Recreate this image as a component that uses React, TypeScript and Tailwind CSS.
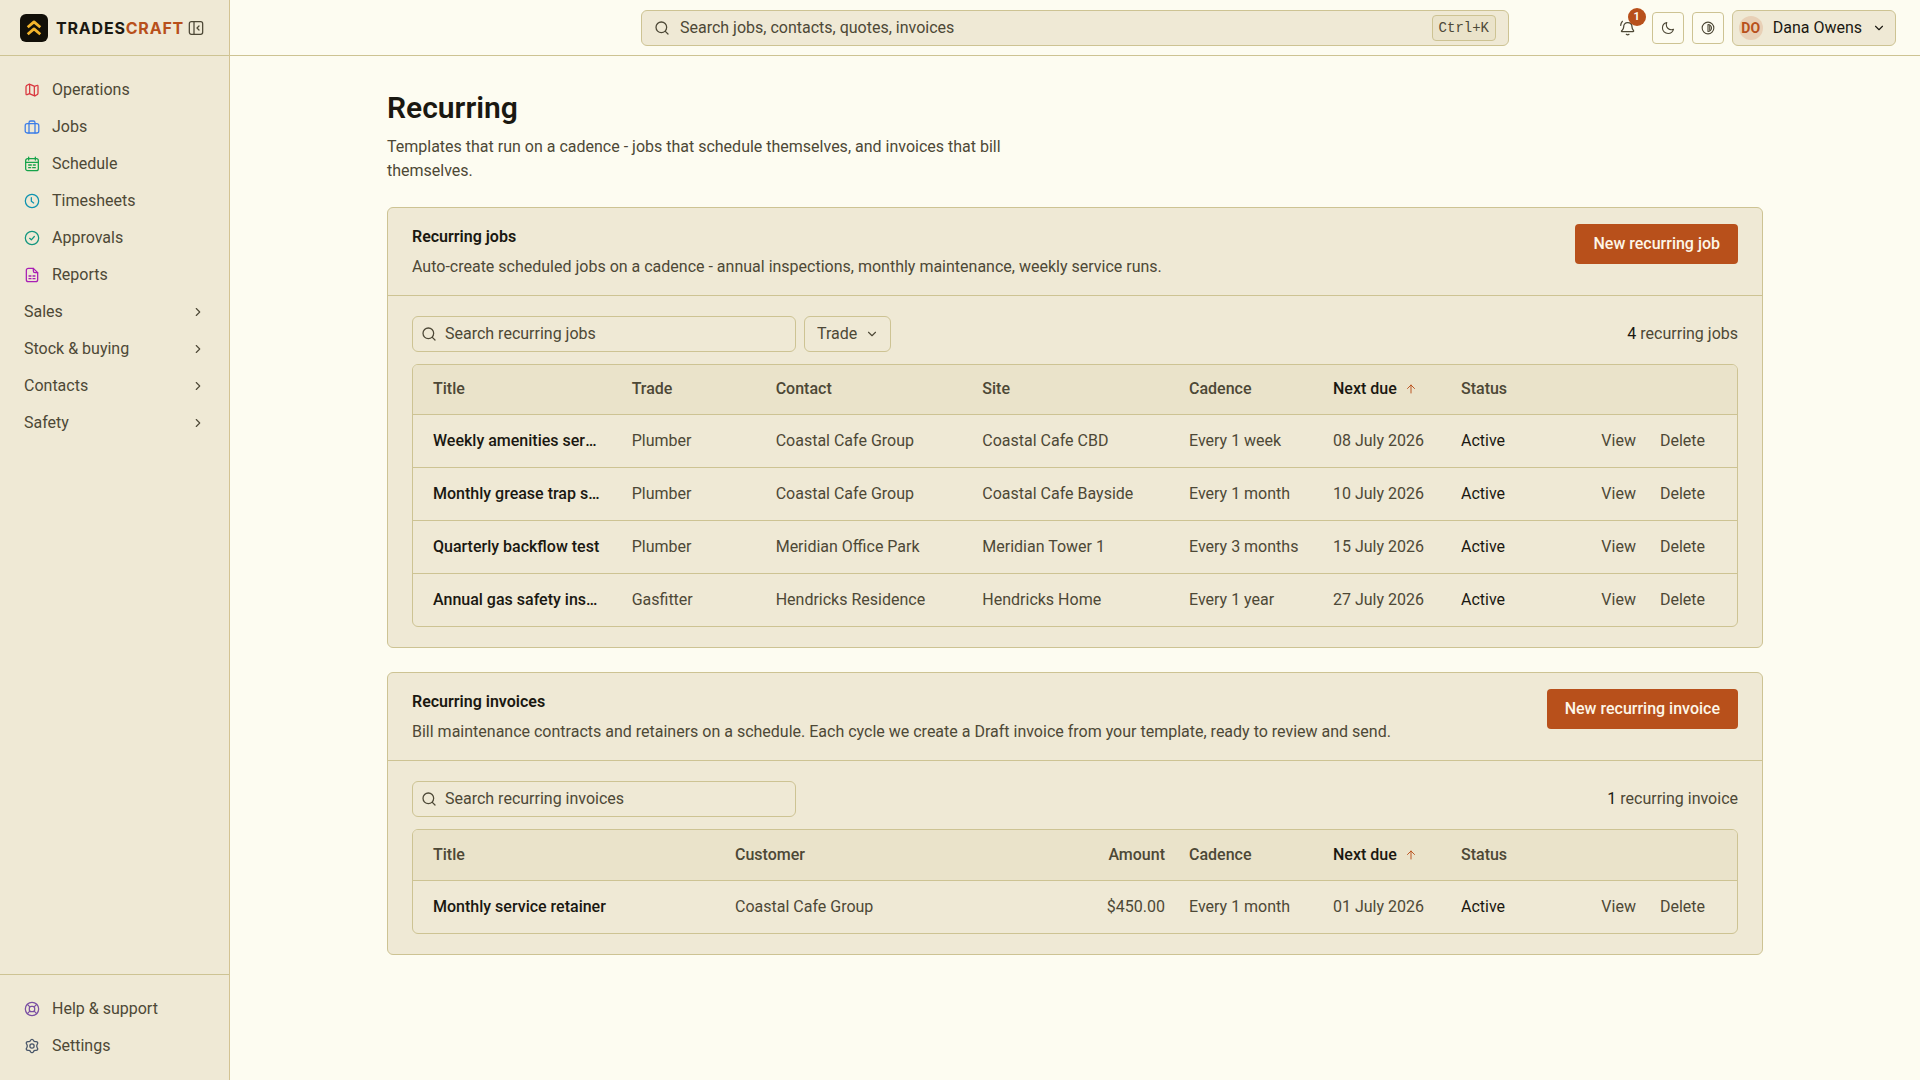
import type { ReactNode } from 'react';

const iconPaths = {
  map: (
    <>
      <path d="M3 8.2c0-1.2 0-1.9.4-2.4.3-.5.9-.8 1.9-1.3l1-.5c.9-.5 1.3-.7 1.8-.7s.9.2 1.8.6l4.300 2c.8.4 1.200.6 1.700.6s.9-.2 1.700-.6c1.700-.9 2.500-1.300 3-.9.4.3.4 1 .4 2.300v8.500c0 1.200 0 1.900-.4 2.400-.3.5-.9.8-1.900 1.300l-1 .5c-.9.5-1.300.7-1.800.7s-.9-.2-1.800-.6l-4.300-2c-.8-.4-1.200-.6-1.700-.6s-.9.2-1.700.6c-1.700.9-2.500 1.300-3 .9C3 18.700 3 18 3 16.700Z" />
      <path d="M8.5 3.500v14M15.500 6.800v13.700" />
    </>
  ),
  briefcase: (
    <>
      <rect x="1.800" y="7" width="20.400" height="14" rx="3" />
      <path d="M7.500 21V5.500c0-1.700.8-2.500 2.500-2.500h4c1.700 0 2.500.8 2.500 2.500V21" />
    </>
  ),
  calendar: (
    <>
      <rect x="2.500" y="4" width="19" height="18" rx="3" />
      <path d="M7 1.800V6M17 1.800V6M2.500 9.500h19M7 13.500h4M14 13.500h3M7 17.500h3M13 17.500h4" />
    </>
  ),
  clock: (
    <>
      <circle cx="12" cy="12" r="10" />
      <path d="M11 7v5.500l3.500 2.500" />
    </>
  ),
  check: (
    <>
      <circle cx="12" cy="12" r="10" />
      <path d="m8.500 12.500 2.500 2.200 4.500-5" />
    </>
  ),
  report: (
    <>
      <path d="M14 2H6.500C4.600 2 3.500 3.100 3.500 5v14c0 1.900 1.100 3 3 3h11c1.900 0 3-1.100 3-3V8.500Z" />
      <path d="M14 2v4c0 1.700.8 2.500 2.500 2.500h4M7.500 13.500h3M13.500 13.500h3M7.500 17.500h3M13.500 17.500h3" />
    </>
  ),
  support: (
    <>
      <circle cx="12" cy="12" r="10" />
      <rect x="8" y="8" width="8" height="8" rx="3" />
      <path d="m5 5 3.800 3.800M19 5l-3.800 3.800M5 19l3.800-3.800M19 19l-3.800-3.800" />
    </>
  ),
  gear: (
    <>
      <circle cx="12" cy="12" r="3.200" />
      <path d="M12 2c1.700 0 2 1.100 2.600 2.300.5.900 1.300 1.300 2.300 1.200 1.400-.1 2.600-.5 3.500 1 .9 1.500-.1 2.300-.8 3.400-.7 1.300-.7 2.900 0 4.200.7 1.100 1.700 1.900.8 3.400-.9 1.500-2.100 1.100-3.500 1-1-.1-1.800.3-2.300 1.200C14 20.900 13.700 22 12 22s-2-1.100-2.600-2.300c-.5-.9-1.300-1.300-2.300-1.200-1.400.1-2.600.5-3.500-1-.9-1.500.1-2.300.8-3.400.7-1.300.7-2.900 0-4.200-.7-1.100-1.700-1.900-.8-3.400.9-1.500 2.100-1.100 3.500-1 1 .1 1.800-.3 2.300-1.200C10 3.100 10.300 2 12 2Z" />
    </>
  ),
  panel: (
    <>
      <rect x="2" y="2.500" width="20" height="19" rx="3" />
      <path d="M9 2.500v19M16.500 9l-3 3 3 3" />
    </>
  ),
  search: (
    <>
      <circle cx="11" cy="11" r="8" />
      <path d="m17 17 4 4" />
    </>
  ),
  bell: (
    <>
      <path d="M2.500 17.500h17c.9 0 1.300-.9.8-1.600-1.300-1.600-2.300-2.900-2.300-5.400C18 6.500 15.300 4 11.500 4S5.500 6.500 5.500 10.500c0 2.500-1 3.800-2.600 5.400-.8.700-.9 1.600-.4 1.600Z" />
      <path d="M9.500 21.500c1 .7 3 .7 4 0M1 8c.2-2.700 1.200-4.500 2.500-6" />
    </>
  ),
  moon: (
    <path d="M21.500 14.100c-1.200.6-2.500.8-3.900.8-4.700 0-8.500-3.800-8.500-8.500 0-1.400.3-2.700.8-3.900C5.600 3.600 2.500 7.300 2.500 11.800c0 5.400 4.300 9.700 9.700 9.700 4.500 0 8.200-3.100 9.300-7.400Z" />
  ),
  contrast: (
    <>
      <circle cx="12" cy="12" r="10" />
      <path d="M12 6v12c3.300 0 6-2.700 6-6s-2.700-6-6-6ZM15 7.500v9" />
    </>
  ),
  chevronRight: <path d="m9 6 6 6-6 6" />,
  chevronDown: <path d="m6 9 6 6 6-6" />,
  arrowUp: <path d="M12 20V4M5 11l7-7 7 7" />,
};

type IconName = keyof typeof iconPaths;

function Icon({ name, size = 16, className = '' }: { name: IconName; size?: number; className?: string }) {
  return (
    <svg
      width={size}
      height={size}
      viewBox="0 0 24 24"
      fill="none"
      stroke="currentColor"
      strokeWidth={1.9}
      strokeLinecap="round"
      strokeLinejoin="round"
      aria-hidden="true"
      className={`shrink-0 ${className}`}
    >
      {iconPaths[name]}
    </svg>
  );
}

const mainLinks: { label: string; icon: IconName; color: string }[] = [
  { label: 'Operations', icon: 'map', color: 'text-[#d9363e]' },
  { label: 'Jobs', icon: 'briefcase', color: 'text-[#3b7de8]' },
  { label: 'Schedule', icon: 'calendar', color: 'text-[#16a34a]' },
  { label: 'Timesheets', icon: 'clock', color: 'text-[#0e93b0]' },
  { label: 'Approvals', icon: 'check', color: 'text-[#12967f]' },
  { label: 'Reports', icon: 'report', color: 'text-[#a81fb5]' },
];

const groups = ['Sales', 'Stock & buying', 'Contacts', 'Safety'];

const footerLinks: { label: string; icon: IconName; color: string }[] = [
  { label: 'Help & support', icon: 'support', color: 'text-[#7a4fa3]' },
  { label: 'Settings', icon: 'gear', color: 'text-[#475569]' },
];

function NavLink({ label, icon, color }: { label: string; icon: IconName; color: string }) {
  return (
    <a href="#" className="flex h-9 items-center gap-3 rounded px-3 hover:bg-[#e9e2c9]">
      <Icon name={icon} className={color} />
      {label}
    </a>
  );
}

function Sidebar() {
  return (
    <aside className="sticky top-0 flex h-screen w-[230px] shrink-0 flex-col border-r border-[#d3c393] bg-[#efe9d5]">
      <div className="flex h-14 items-center border-b border-[#cdc393] px-5">
        <svg width="28" height="28" viewBox="0 0 28 28" aria-hidden="true" className="shrink-0">
          <rect width="28" height="28" rx="6" fill="#110f08" />
          <path
            d="m7.700 13.300 6.300-5.400 6.300 5.400M7.700 20.300l6.300-5.400 6.300 5.400"
            fill="none"
            stroke="#f2b42c"
            strokeWidth="2.8"
            strokeLinejoin="round"
          />
        </svg>
        <span className="ml-2 font-[Inter,sans-serif] text-base leading-6 font-bold tracking-wider text-[#1a1811]">
          TRADES<span className="text-[#b8501b]">CRAFT</span>
        </span>
        <button type="button" aria-label="Collapse sidebar" className="ml-1">
          <Icon name="panel" />
        </button>
      </div>
      <nav className="flex flex-1 flex-col gap-px px-3 py-4">
        {mainLinks.map((link) => (
          <NavLink key={link.label} {...link} />
        ))}
        {groups.map((group) => (
          <button key={group} type="button" className="flex h-9 items-center justify-between rounded px-3 hover:bg-[#e9e2c9]">
            {group}
            <Icon name="chevronRight" size={14} />
          </button>
        ))}
      </nav>
      <nav className="flex flex-col gap-px border-t border-[#cdc393] px-3 py-4">
        {footerLinks.map((link) => (
          <NavLink key={link.label} {...link} />
        ))}
      </nav>
    </aside>
  );
}

function TopBar() {
  return (
    <header className="grid h-14 grid-cols-[1fr_minmax(0,868px)_1fr] items-center border-b border-[#cdc393] px-6">
      <label className="col-start-2 flex h-9 items-center gap-2.5 rounded-md border border-[#cdc393] bg-[#efe9d5] px-3">
        <Icon name="search" />
        <input
          type="search"
          aria-label="Search"
          placeholder="Search jobs, contacts, quotes, invoices"
          className="min-w-0 flex-1 bg-transparent outline-none placeholder:text-[#4d4836]"
        />
        <kbd className="rounded border border-[#cdc393] bg-[#eae3ca] px-1.5 font-['Liberation_Mono',monospace] text-sm leading-6">
          Ctrl+K
        </kbd>
      </label>
      <div className="flex items-center justify-end gap-2">
        <button type="button" aria-label="Notifications" className="relative flex size-8 items-center justify-center">
          <Icon name="bell" />
          <span className="absolute -top-1 -right-0.5 flex size-[18px] items-center justify-center rounded-full bg-[#b8501b] text-[11px] leading-none font-bold text-[#fdfcf1]">
            1
          </span>
        </button>
        <button type="button" aria-label="Dark mode" className="flex size-8 items-center justify-center rounded border border-[#cdc393]">
          <Icon name="moon" size={14} />
        </button>
        <button type="button" aria-label="Contrast" className="flex size-8 items-center justify-center rounded border border-[#cdc393]">
          <Icon name="contrast" size={14} />
        </button>
        <button
          type="button"
          aria-haspopup="menu"
          className="flex h-9 items-center gap-2.5 rounded-md border border-[#cdc393] bg-[#efe9d5] pr-[9px] pl-1.5 text-[#1a1811]"
        >
          <span className="flex size-6 items-center justify-center rounded-full bg-[#e8d0b6] text-sm leading-none font-bold text-[#b8501b]">
            DO
          </span>
          Dana Owens
          <Icon name="chevronDown" size={14} />
        </button>
      </div>
    </header>
  );
}

interface Column {
  label: string;
  width?: string;
  kind?: 'title' | 'amount' | 'sorted' | 'status';
}

function DataTable({ columns, rows, headHeight }: { columns: Column[]; rows: string[][]; headHeight: string }) {
  return (
    <div className="mt-3 overflow-hidden rounded-md border border-[#cdc393]">
      <table className="w-full table-fixed text-left">
        <thead className="bg-[#eae3ca]">
          <tr className={`${headHeight} border-b border-[#cdc393]`}>
            {columns.map((col) => (
              <th
                key={col.label}
                scope="col"
                aria-sort={col.kind === 'sorted' ? 'ascending' : undefined}
                className={`px-3 py-0 font-medium first:pl-5 ${col.width ?? ''} ${col.kind === 'amount' ? 'text-right' : ''}`}
              >
                {col.kind === 'sorted' ? (
                  <button type="button" className="flex items-center gap-2 text-[#1a1811]">
                    {col.label}
                    <Icon name="arrowUp" size={12} className="text-[#b8501b]" />
                  </button>
                ) : (
                  col.label
                )}
              </th>
            ))}
            <th scope="col" aria-label="Actions" className="w-40" />
          </tr>
        </thead>
        <tbody>
          {rows.map((row) => (
            <tr key={row[0]} className="h-[53px] border-b border-[#cdc393] last:border-b-0">
              {row.map((value, i) => {
                const kind = columns[i].kind;
                return (
                  <td
                    key={columns[i].label}
                    className={`truncate px-3 py-0 first:pr-[18px] first:pl-5 ${
                      kind === 'title' ? 'font-medium text-[#1a1811]' : ''
                    } ${kind === 'status' ? 'text-[#1a1811]' : ''} ${kind === 'amount' ? 'text-right' : ''}`}
                  >
                    {value}
                  </td>
                );
              })}
              <td className="py-0 pr-8">
                <div className="flex justify-end gap-6">
                  <a href="#">View</a>
                  <button type="button">Delete</button>
                </div>
              </td>
            </tr>
          ))}
        </tbody>
      </table>
    </div>
  );
}

interface PanelProps {
  title: string;
  description: string;
  action: string;
  placeholder: string;
  count: number;
  countLabel: string;
  filter?: ReactNode;
  children: ReactNode;
}

function Panel({ title, description, action, placeholder, count, countLabel, filter, children }: PanelProps) {
  return (
    <section className="mt-6 rounded-md border border-[#cdc393] bg-[#efe9d5]">
      <div className="flex items-start justify-between gap-6 border-b border-[#cdc393] px-6 py-4">
        <div>
          <h2 className="leading-[26px] font-semibold text-[#1a1811]">{title}</h2>
          <p className="mt-1 leading-[25px]">{description}</p>
        </div>
        <button type="button" className="h-10 shrink-0 rounded bg-[#b8501b] px-[18px] font-medium text-[#fdf6e8]">
          {action}
        </button>
      </div>
      <div className="px-6 py-5">
        <div className="flex items-center gap-2">
          <label className="flex h-9 w-full max-w-sm items-center gap-2 rounded-md border border-[#cdc393] px-2">
            <Icon name="search" />
            <input
              type="search"
              aria-label={placeholder}
              placeholder={placeholder}
              className="min-w-0 flex-1 bg-transparent outline-none placeholder:text-[#4d4836]"
            />
          </label>
          {filter}
          <p className="ml-auto">
            <span className="text-[#1a1811]">{count}</span> {countLabel}
          </p>
        </div>
        {children}
      </div>
    </section>
  );
}

function TradeFilter() {
  return (
    <div className="grid items-center">
      <select
        aria-label="Trade"
        className="col-start-1 row-start-1 h-9 w-[87px] appearance-none rounded-md border border-[#cdc393] bg-transparent pl-3"
      >
        <option>Trade</option>
        <option>Plumber</option>
        <option>Gasfitter</option>
      </select>
      <Icon name="chevronDown" size={14} className="pointer-events-none col-start-1 row-start-1 mr-3 justify-self-end" />
    </div>
  );
}

const jobColumns: Column[] = [
  { label: 'Title', kind: 'title' },
  { label: 'Trade', width: 'w-36' },
  { label: 'Contact' },
  { label: 'Site' },
  { label: 'Cadence', width: 'w-36' },
  { label: 'Next due', width: 'w-32', kind: 'sorted' },
  { label: 'Status', width: 'w-32', kind: 'status' },
];

const jobs = [
  ['Weekly amenities service', 'Plumber', 'Coastal Cafe Group', 'Coastal Cafe CBD', 'Every 1 week', '08 July 2026', 'Active'],
  ['Monthly grease trap service', 'Plumber', 'Coastal Cafe Group', 'Coastal Cafe Bayside', 'Every 1 month', '10 July 2026', 'Active'],
  ['Quarterly backflow test', 'Plumber', 'Meridian Office Park', 'Meridian Tower 1', 'Every 3 months', '15 July 2026', 'Active'],
  ['Annual gas safety inspection', 'Gasfitter', 'Hendricks Residence', 'Hendricks Home', 'Every 1 year', '27 July 2026', 'Active'],
];

const invoiceColumns: Column[] = [
  { label: 'Title', kind: 'title' },
  { label: 'Customer' },
  { label: 'Amount', width: 'w-36', kind: 'amount' },
  { label: 'Cadence', width: 'w-36' },
  { label: 'Next due', width: 'w-32', kind: 'sorted' },
  { label: 'Status', width: 'w-32', kind: 'status' },
];

const invoices = [
  ['Monthly service retainer', 'Coastal Cafe Group', '$450.00', 'Every 1 month', '01 July 2026', 'Active'],
];

export default function App() {
  return (
    <div className="flex min-h-screen bg-[#fdfcf1] font-[Roboto,sans-serif] text-base text-[#4d4836]">
      <Sidebar />
      <div className="min-w-0 flex-1">
        <TopBar />
        <main className="mx-auto max-w-[1440px] px-8 py-8">
          <h1 className="text-[30px] leading-[39px] font-semibold text-[#1a1811]">Recurring</h1>
          <p className="mt-2 max-w-[640px] leading-6">
            Templates that run on a cadence - jobs that schedule themselves, and invoices that bill themselves.
          </p>
          <Panel
            title="Recurring jobs"
            description="Auto-create scheduled jobs on a cadence - annual inspections, monthly maintenance, weekly service runs."
            action="New recurring job"
            placeholder="Search recurring jobs"
            count={jobs.length}
            countLabel="recurring jobs"
            filter={<TradeFilter />}
          >
            <DataTable columns={jobColumns} rows={jobs} headHeight="h-[49px]" />
          </Panel>
          <Panel
            title="Recurring invoices"
            description="Bill maintenance contracts and retainers on a schedule. Each cycle we create a Draft invoice from your template, ready to review and send."
            action="New recurring invoice"
            placeholder="Search recurring invoices"
            count={invoices.length}
            countLabel="recurring invoice"
          >
            <DataTable columns={invoiceColumns} rows={invoices} headHeight="h-[50px]" />
          </Panel>
        </main>
      </div>
    </div>
  );
}
